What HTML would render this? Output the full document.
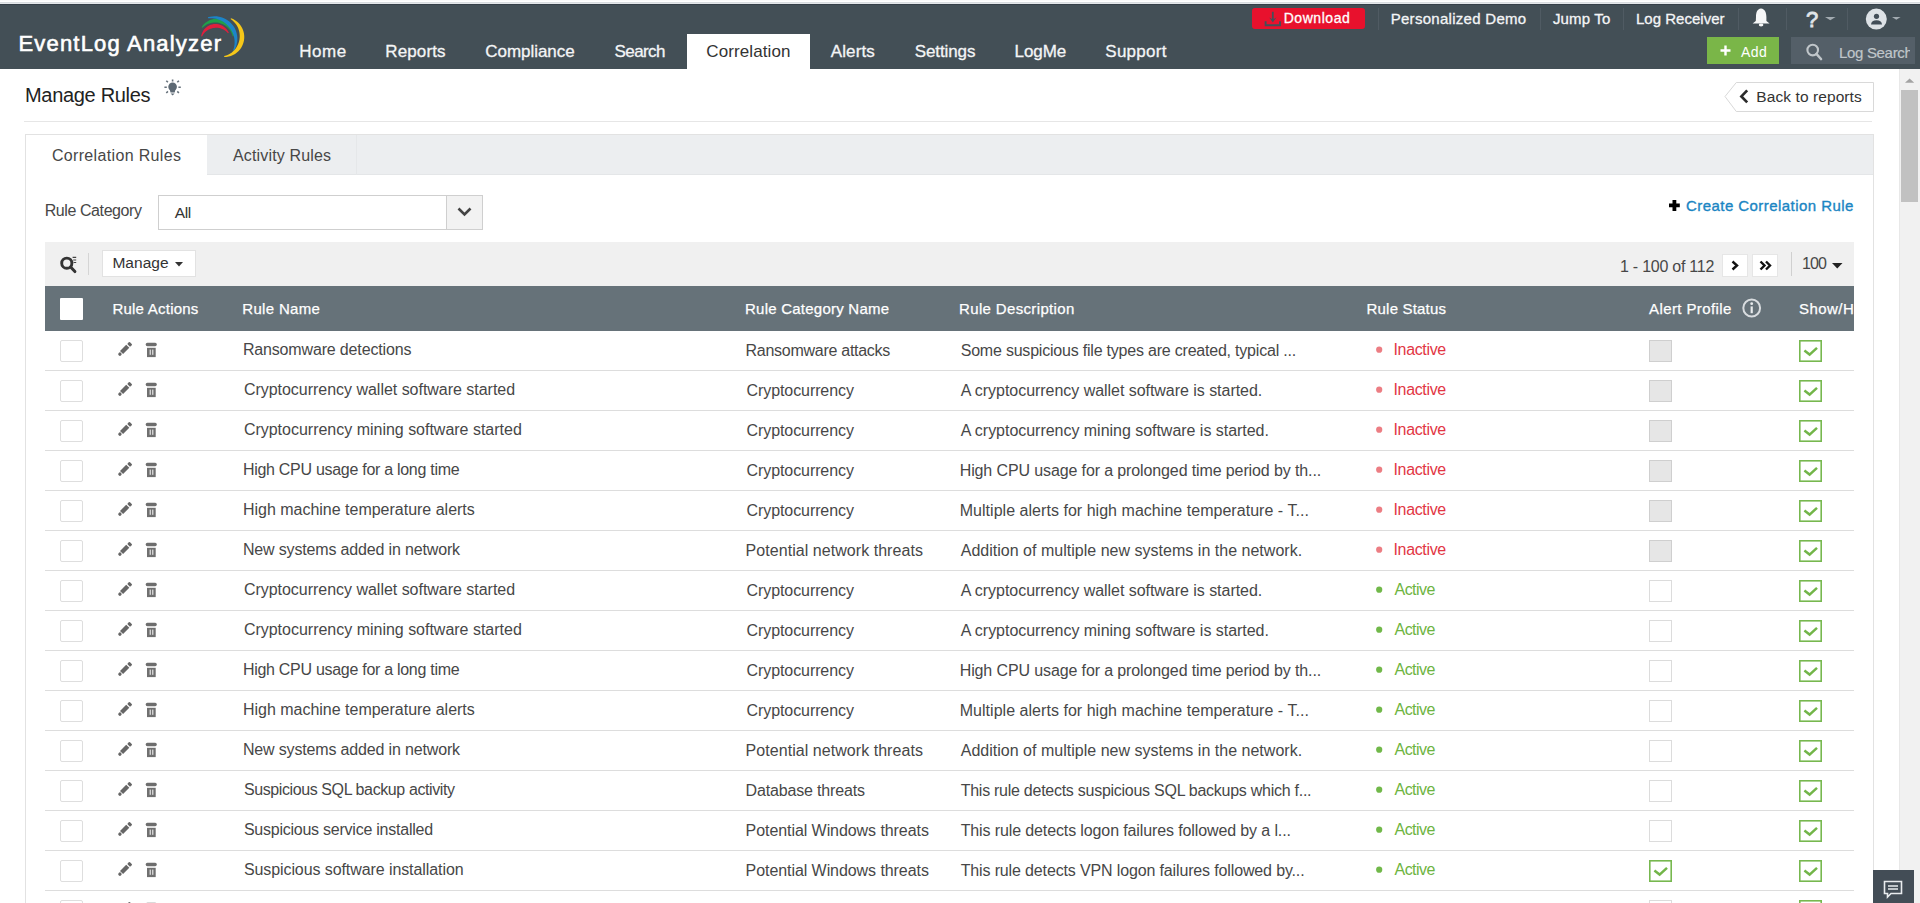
<!DOCTYPE html><html><head><meta charset="utf-8"><style>
*{margin:0;padding:0;box-sizing:border-box}
html,body{width:1920px;height:903px;overflow:hidden;background:#fff;font-family:"Liberation Sans",sans-serif}
.t{position:absolute;white-space:nowrap}
.r{position:absolute}
svg{position:absolute;overflow:visible}
</style></head><body>
<div class="r" style="left:0px;top:0px;width:1920px;height:1px;background:#fafafa"></div>
<div class="r" style="left:0px;top:2px;width:1920px;height:1px;background:#d8dcdf"></div>
<div class="r" style="left:0px;top:3px;width:1920px;height:1px;background:#e4e7ea"></div>
<div class="r" style="left:0px;top:4px;width:1920px;height:65px;background:#434f56"></div>
<div class="r" style="left:0px;top:4px;width:1920px;height:1px;background:#353f48"></div>
<div class="t" style="left:18.40px;top:33.00px;font-size:22px;line-height:22px;color:#fff;letter-spacing:1.197px;-webkit-text-stroke:0.6px #fff;">EventLog Analyzer</div>
<svg style="left:195px;top:12px;" width="55" height="50" viewBox="0 0 55 50"><path d="M6.12,24.15 L6.46,22.71 L6.94,21.29 L7.56,19.91 L8.34,18.59 L9.25,17.34 L10.30,16.19 L11.47,15.16 L12.76,14.24 L14.14,13.47 L15.61,12.86 L17.13,12.41 L18.70,12.12 L20.30,12.02 L21.89,12.08 L23.46,12.33 L24.99,12.74 L26.46,13.31 L27.85,14.03 L29.14,14.89 L30.33,15.88 L31.40,16.97 L32.34,18.16 L33.15,19.42 L33.83,20.74 L32.97,21.26 L32.06,20.24 L31.07,19.32 L30.01,18.51 L28.89,17.80 L27.74,17.21 L26.55,16.72 L25.34,16.33 L24.11,16.05 L22.87,15.87 L21.63,15.78 L20.40,15.79 L19.17,15.89 L17.95,16.09 L16.75,16.38 L15.57,16.77 L14.41,17.24 L13.29,17.81 L12.21,18.48 L11.17,19.25 L10.20,20.11 L9.29,21.06 L8.46,22.10 L7.71,23.24 L7.08,24.45 Z" fill="#e01f3d"/><path d="M6.60,15.20 L7.62,13.71 L8.79,12.32 L10.11,11.04 L11.58,9.91 L13.16,8.92 L14.86,8.11 L16.65,7.48 L18.50,7.05 L20.40,6.83 L22.32,6.82 L24.23,7.03 L26.11,7.45 L27.93,8.07 L29.67,8.90 L31.30,9.91 L32.80,11.09 L34.16,12.42 L35.36,13.89 L36.38,15.47 L37.22,17.14 L37.87,18.87 L38.34,20.65 L38.61,22.45 L38.70,24.25 L37.70,24.35 L37.26,22.73 L36.67,21.17 L35.93,19.70 L35.07,18.32 L34.10,17.03 L33.02,15.86 L31.86,14.79 L30.62,13.84 L29.31,13.00 L27.94,12.28 L26.52,11.68 L25.05,11.20 L23.56,10.84 L22.03,10.61 L20.49,10.51 L18.93,10.54 L17.37,10.70 L15.82,11.01 L14.29,11.45 L12.79,12.03 L11.34,12.76 L9.94,13.64 L8.62,14.65 L7.40,15.80 Z" fill="#1fa049"/><path d="M12.90,5.31 L15.04,4.76 L17.24,4.41 L19.49,4.28 L21.75,4.36 L24.01,4.67 L26.24,5.21 L28.41,5.98 L30.50,6.96 L32.49,8.17 L34.35,9.57 L36.05,11.16 L37.59,12.92 L38.93,14.83 L40.06,16.87 L40.98,19.01 L41.67,21.23 L42.13,23.50 L42.35,25.79 L42.34,28.08 L42.10,30.35 L41.64,32.57 L40.97,34.71 L40.10,36.77 L39.05,38.72 L38.15,38.28 L38.80,36.28 L39.25,34.25 L39.52,32.20 L39.60,30.15 L39.51,28.12 L39.24,26.12 L38.81,24.17 L38.22,22.26 L37.49,20.43 L36.60,18.66 L35.59,16.98 L34.44,15.39 L33.17,13.89 L31.78,12.50 L30.28,11.22 L28.67,10.06 L26.97,9.03 L25.17,8.15 L23.29,7.41 L21.35,6.83 L19.34,6.42 L17.29,6.19 L15.20,6.14 L13.10,6.29 Z" fill="#1d84c8"/><path d="M36.02,6.15 L38.07,7.03 L40.03,8.15 L41.87,9.48 L43.56,11.04 L45.08,12.79 L46.40,14.72 L47.49,16.80 L48.34,19.01 L48.92,21.32 L49.22,23.69 L49.24,26.08 L48.97,28.46 L48.42,30.79 L47.60,33.04 L46.51,35.17 L45.19,37.14 L43.65,38.94 L41.92,40.53 L40.03,41.91 L38.01,43.04 L35.89,43.93 L33.70,44.57 L31.48,44.96 L29.26,45.10 L29.14,44.10 L31.16,43.52 L33.08,42.74 L34.88,41.78 L36.56,40.64 L38.10,39.36 L39.48,37.95 L40.72,36.43 L41.79,34.82 L42.70,33.12 L43.45,31.35 L44.03,29.53 L44.44,27.67 L44.68,25.78 L44.75,23.88 L44.64,21.96 L44.35,20.06 L43.89,18.17 L43.24,16.32 L42.41,14.53 L41.39,12.81 L40.20,11.18 L38.82,9.66 L37.28,8.27 L35.58,7.05 Z" fill="#f5c719"/></svg>
<div class="r" style="left:687px;top:34px;width:123px;height:35px;background:#fff"></div>
<div class="t" style="left:299.30px;top:43.00px;font-size:17px;line-height:17px;color:#f4f5f6;letter-spacing:0.536px;-webkit-text-stroke:0.3px #f4f5f6;">Home</div>
<div class="t" style="left:385.30px;top:43.00px;font-size:17px;line-height:17px;color:#f4f5f6;letter-spacing:0.113px;-webkit-text-stroke:0.3px #f4f5f6;">Reports</div>
<div class="t" style="left:485.30px;top:43.00px;font-size:17px;line-height:17px;color:#f4f5f6;letter-spacing:-0.046px;-webkit-text-stroke:0.3px #f4f5f6;">Compliance</div>
<div class="t" style="left:614.50px;top:43.00px;font-size:17px;line-height:17px;color:#f4f5f6;letter-spacing:-0.582px;-webkit-text-stroke:0.3px #f4f5f6;">Search</div>
<div class="t" style="left:706.30px;top:43.00px;font-size:17px;line-height:17px;color:#333;letter-spacing:0.101px;">Correlation</div>
<div class="t" style="left:830.80px;top:43.00px;font-size:17px;line-height:17px;color:#f4f5f6;letter-spacing:0.089px;-webkit-text-stroke:0.3px #f4f5f6;">Alerts</div>
<div class="t" style="left:914.70px;top:43.00px;font-size:17px;line-height:17px;color:#f4f5f6;letter-spacing:-0.089px;-webkit-text-stroke:0.3px #f4f5f6;">Settings</div>
<div class="t" style="left:1014.50px;top:43.00px;font-size:17px;line-height:17px;color:#f4f5f6;letter-spacing:-0.056px;-webkit-text-stroke:0.3px #f4f5f6;">LogMe</div>
<div class="t" style="left:1105.30px;top:43.00px;font-size:17px;line-height:17px;color:#f4f5f6;letter-spacing:0.264px;-webkit-text-stroke:0.3px #f4f5f6;">Support</div>
<div class="r" style="left:1252px;top:8px;width:113px;height:21px;background:#e8112d;border-radius:3px"></div>
<svg style="left:1264px;top:11px;" width="18" height="16" viewBox="0 0 18 16"><path d="M8.8,0.8 V10" stroke="#42505a" stroke-width="1.8"/><path d="M5.2,6.4 L8.8,11.4 L12.4,6.4 L8.8,8.6 Z" fill="#42505a"/><path d="M1.6,10.2 V14.2 H16 V10.2" stroke="#42505a" stroke-width="1.9" fill="none"/></svg>
<div class="t" style="left:1283.70px;top:11.00px;font-size:14px;line-height:14px;color:#fff;letter-spacing:0.546px;-webkit-text-stroke:0.3px #fff;">Download</div>
<div class="r" style="left:1378px;top:8px;width:1px;height:22px;background:#505b63"></div>
<div class="r" style="left:1540px;top:8px;width:1px;height:22px;background:#505b63"></div>
<div class="r" style="left:1623px;top:8px;width:1px;height:22px;background:#505b63"></div>
<div class="r" style="left:1738px;top:8px;width:1px;height:22px;background:#505b63"></div>
<div class="r" style="left:1786px;top:8px;width:1px;height:22px;background:#505b63"></div>
<div class="r" style="left:1847px;top:8px;width:1px;height:22px;background:#505b63"></div>
<div class="t" style="left:1390.70px;top:11.00px;font-size:15px;line-height:15px;color:#f4f5f6;letter-spacing:0.284px;-webkit-text-stroke:0.3px #f4f5f6;">Personalized Demo</div>
<div class="t" style="left:1552.90px;top:11.00px;font-size:15px;line-height:15px;color:#f4f5f6;letter-spacing:0.175px;-webkit-text-stroke:0.3px #f4f5f6;">Jump To</div>
<div class="t" style="left:1636.00px;top:11.00px;font-size:15px;line-height:15px;color:#f4f5f6;letter-spacing:0.019px;-webkit-text-stroke:0.3px #f4f5f6;">Log Receiver</div>
<svg style="left:1752px;top:8px;" width="19" height="20" viewBox="0 0 19 20"><path d="M9,0.6 C5,1.2 4,4.8 4,9 L3.8,13 L0.6,15.6 H17.6 L14.4,13 L14.4,9 C14.4,4.8 13,1.2 9,0.6 Z" fill="#f6f7f8"/><ellipse cx="9.1" cy="17" rx="2.3" ry="1.4" fill="#f6f7f8"/></svg>
<div class="t" style="left:1806.00px;top:9.00px;font-size:22px;line-height:22px;color:#e0e4e7;letter-spacing:-1.800px;-webkit-text-stroke:0.8px #e0e4e7;">?</div>
<svg style="left:1824.8px;top:17px;" width="11" height="4" viewBox="0 0 11 4"><path d="M0,0 H10.6 L5.3,3.3 Z" fill="#a3abb1"/></svg>
<svg style="left:1865px;top:8px;" width="24" height="24" viewBox="0 0 24 24"><circle cx="11.3" cy="11.1" r="10.5" fill="#dde2e6"/><circle cx="11.5" cy="8.3" r="2.6" fill="#424e58"/><path d="M6,16.5 Q6.5,12.3 11.5,12.3 Q16.5,12.3 17,16.5 Z" fill="#424e58"/></svg>
<svg style="left:1892px;top:16.8px;" width="9" height="3" viewBox="0 0 9 3"><path d="M0,0 H8.6 L4.3,2.8 Z" fill="#a3abb1"/></svg>
<div class="r" style="left:1707px;top:37px;width:72px;height:27px;background:#7ab648"></div>
<svg style="left:1720px;top:45px;" width="11" height="11" viewBox="0 0 11 11"><path d="M5.5,0.5 V10.5 M0.5,5.5 H10.5" stroke="#fff" stroke-width="2.4"/></svg>
<div class="t" style="left:1740.90px;top:45.00px;font-size:14px;line-height:14px;color:#fff;letter-spacing:0.488px;">Add</div>
<div class="r" style="left:1791px;top:37px;width:124px;height:27px;background:#545f68"></div>
<div class="r" style="left:1791px;top:37px;width:119px;height:27px;overflow:hidden">
<svg style="left:15px;top:5px;" width="17" height="18" viewBox="0 0 17 18"><circle cx="6.7" cy="8.1" r="5.3" stroke="#c0c6ca" stroke-width="2.1" fill="none"/><path d="M10.5,12 L15,17" stroke="#c0c6ca" stroke-width="2.6" stroke-linecap="round"/></svg>
<div class="t" style="left:48.00px;top:8.00px;font-size:15px;line-height:15px;color:#c0c6ca;letter-spacing:-0.320px;-webkit-text-stroke:0.2px #c0c6ca;">Log Search</div>
</div>
<div class="t" style="left:25.00px;top:85.00px;font-size:20px;line-height:20px;color:#222;letter-spacing:-0.315px;">Manage Rules</div>
<svg style="left:162px;top:77px;" width="22" height="22" viewBox="0 0 22 22"><circle cx="10.6" cy="9.7" r="4.3" fill="#5d6974"/><path d="M7.4,11 L13.8,11 L12.7,15.4 H8.5 Z" fill="#5d6974"/><path d="M8.6,16.5 H12.6 L10.6,18.6 Z" fill="#5d6974"/><path d="M10.6,2.4 V4.6 M2.4,10.3 H4.8 M16.4,10.3 H18.8 M4.3,3.7 L5.9,5.3 M16.9,3.7 L15.3,5.3 M4.3,16 L5.9,14.4 M16.9,16 L15.3,14.4" stroke="#66717b" stroke-width="1.6"/></svg>
<svg style="left:1724px;top:81px;" width="151" height="32" viewBox="0 0 151 32"><path d="M12.3,1.5 H149.5 V30.5 H12.3 L1,15.5 Z" fill="#fff" stroke="#d9d9d9" stroke-width="1"/><path d="M23.2,9.4 L17.4,15.4 L23.2,21.4" stroke="#2b2b2b" stroke-width="2.7" fill="none"/></svg>
<div class="t" style="left:1756.30px;top:89.00px;font-size:15.5px;line-height:15.5px;color:#333;letter-spacing:0.086px;">Back to reports</div>
<div class="r" style="left:24px;top:121px;width:1848px;height:1px;background:#e6e6e6"></div>
<div class="r" style="left:25px;top:134px;width:1849px;height:800px;border:1px solid #e2e2e2;background:#fff"></div>
<div class="r" style="left:26px;top:135px;width:1847px;height:40px;background:#eceef0;border-bottom:1px solid #e4e6e8"></div>
<div class="r" style="left:26px;top:135px;width:181px;height:41px;background:#fff"></div>
<div class="r" style="left:356px;top:135px;width:1px;height:40px;background:#e5e7e9"></div>
<div class="t" style="left:51.90px;top:148.00px;font-size:16px;line-height:16px;color:#474747;letter-spacing:0.343px;">Correlation Rules</div>
<div class="t" style="left:233.00px;top:148.00px;font-size:16px;line-height:16px;color:#474747;letter-spacing:0.152px;">Activity Rules</div>
<div class="t" style="left:44.70px;top:203.00px;font-size:16px;line-height:16px;color:#474747;letter-spacing:-0.414px;">Rule Category</div>
<div class="r" style="left:158px;top:195px;width:325px;height:35px;border:1px solid #cfcfcf;background:#fff"></div>
<div class="r" style="left:446px;top:196px;width:36px;height:33px;background:#f2f2f2;border-left:1px solid #cfcfcf"></div>
<svg style="left:457px;top:207px;" width="15" height="10" viewBox="0 0 15 10"><path d="M1.5,1.5 L7.5,7.5 L13.5,1.5" stroke="#444" stroke-width="2.6" fill="none"/></svg>
<div class="t" style="left:174.80px;top:205.00px;font-size:15.5px;line-height:15.5px;color:#333;letter-spacing:-0.391px;">All</div>
<svg style="left:1669px;top:200px;" width="11" height="11" viewBox="0 0 11 11"><path d="M5.4,0 V10.9 M0,5.45 H10.8" stroke="#000" stroke-width="3.8"/></svg>
<div class="t" style="left:1686.00px;top:198.00px;font-size:15px;line-height:15px;color:#1a85c3;letter-spacing:0.444px;-webkit-text-stroke:0.35px #1a85c3;">Create Correlation Rule</div>
<div class="r" style="left:45px;top:242px;width:1809px;height:44px;background:#f0f0f0"></div>
<svg style="left:59px;top:255px;" width="19" height="19" viewBox="0 0 19 19"><circle cx="7.8" cy="8.2" r="5.1" stroke="#333" stroke-width="2.9" fill="none"/><path d="M11.6,12 L15.9,16.6" stroke="#333" stroke-width="3" stroke-linecap="round"/><path d="M13.6,2.4 H17.2 M14.2,5 H17.2 M14.6,7.5 H17.2" stroke="#444" stroke-width="1.2"/></svg>
<div class="r" style="left:88px;top:253px;width:1px;height:22px;background:#d5d5d5"></div>
<div class="r" style="left:102px;top:250px;width:94px;height:27px;background:#fff;border:1px solid #e2e2e2"></div>
<div class="t" style="left:112.40px;top:255.00px;font-size:15.5px;line-height:15.5px;color:#333;letter-spacing:0.041px;">Manage</div>
<svg style="left:175px;top:262px;" width="9" height="5" viewBox="0 0 9 5"><path d="M0,0 H8 L4,4.5 Z" fill="#333"/></svg>
<div class="t" style="left:1620.00px;top:259.00px;font-size:16px;line-height:16px;color:#474747;letter-spacing:-0.243px;">1 - 100 of 112</div>
<div class="r" style="left:1722px;top:254px;width:26px;height:23px;background:#fff;border:1px solid #e6e6e6"></div>
<svg style="left:1731px;top:260px;" width="8" height="11" viewBox="0 0 8 11"><path d="M1.5,1.5 L6,5.5 L1.5,9.5" stroke="#111" stroke-width="2.4" fill="none"/></svg>
<div class="r" style="left:1752px;top:254px;width:26px;height:23px;background:#fff;border:1px solid #e6e6e6"></div>
<svg style="left:1759px;top:260px;" width="13" height="11" viewBox="0 0 13 11"><path d="M1.5,1.5 L5.5,5.5 L1.5,9.5 M7,1.5 L11,5.5 L7,9.5" stroke="#111" stroke-width="2.4" fill="none"/></svg>
<div class="r" style="left:1791px;top:252px;width:1px;height:24px;background:#d0d0d0"></div>
<div class="t" style="left:1802.00px;top:256.00px;font-size:16px;line-height:16px;color:#474747;letter-spacing:-0.898px;">100</div>
<svg style="left:1832px;top:263px;" width="11" height="6" viewBox="0 0 11 6"><path d="M0,0 H10.5 L5.25,5.5 Z" fill="#222"/></svg>
<div class="r" style="left:45px;top:286px;width:1809px;height:45px;background:#667279"></div>
<div class="r" style="left:60px;top:298px;width:23px;height:22px;background:#fff;border-radius:1px"></div>
<div class="t" style="left:112.40px;top:301.00px;font-size:15px;line-height:15px;color:#fff;letter-spacing:0.236px;-webkit-text-stroke:0.25px #fff;">Rule Actions</div>
<div class="t" style="left:242.30px;top:301.00px;font-size:15px;line-height:15px;color:#fff;letter-spacing:0.314px;-webkit-text-stroke:0.25px #fff;">Rule Name</div>
<div class="t" style="left:745.00px;top:301.00px;font-size:15px;line-height:15px;color:#fff;letter-spacing:0.234px;-webkit-text-stroke:0.25px #fff;">Rule Category Name</div>
<div class="t" style="left:959.00px;top:301.00px;font-size:15px;line-height:15px;color:#fff;letter-spacing:0.353px;-webkit-text-stroke:0.25px #fff;">Rule Description</div>
<div class="t" style="left:1366.60px;top:301.00px;font-size:15px;line-height:15px;color:#fff;letter-spacing:0.176px;-webkit-text-stroke:0.25px #fff;">Rule Status</div>
<div class="t" style="left:1649.00px;top:301.00px;font-size:15px;line-height:15px;color:#fff;letter-spacing:0.401px;-webkit-text-stroke:0.25px #fff;">Alert Profile</div>
<svg style="left:1742px;top:298px;" width="20" height="20" viewBox="0 0 20 20"><circle cx="9.7" cy="10" r="8.4" stroke="#d8dcdf" stroke-width="2" fill="none"/><circle cx="9.7" cy="5.7" r="1.4" fill="#e8ebed"/><path d="M9.7,8.4 V15.2" stroke="#e8ebed" stroke-width="2.2"/></svg>
<div class="r" style="left:1790px;top:286px;width:64px;height:45px;overflow:hidden">
<div class="t" style="left:9.00px;top:15.00px;font-size:15px;line-height:15px;color:#fff;letter-spacing:0.451px;-webkit-text-stroke:0.25px #fff;">Show/Hide</div>
</div>
<div class="r" style="left:0;top:331px;width:1854px;height:572px;overflow:hidden">
<div class="r" style="left:45px;top:39px;width:1809px;height:1px;background:#dddddd"></div>
<div class="r" style="left:60px;top:9px;width:23px;height:22px;border:1px solid #dedede;border-radius:2px;background:#fff"></div>
<svg style="left:112px;top:7px;" width="25" height="22" viewBox="0 0 25 22"><g transform="translate(7,17) rotate(-45)" fill="#666"><circle cx="1.3" cy="0" r="1.7"/><rect x="3.6" y="-2.2" width="8.8" height="4.4"/><rect x="13.6" y="-2.1" width="3.2" height="4.2" rx="0.9"/></g></svg>
<svg style="left:145px;top:11px;" width="13" height="16" viewBox="0 0 13 16"><rect x="0.7" y="0.7" width="11.1" height="3.5" rx="1.6" fill="#6e6e6e"/><rect x="2" y="5.8" width="8.7" height="9.3" fill="#707070"/><rect x="4.6" y="7.6" width="1.3" height="5.2" fill="#ddd"/><rect x="7.1" y="7.6" width="1.3" height="5.2" fill="#ddd"/></svg>
<div class="t" style="left:242.90px;top:11.00px;font-size:16px;line-height:16px;color:#474747;letter-spacing:-0.157px;">Ransomware detections</div>
<div class="t" style="left:745.60px;top:12.00px;font-size:16px;line-height:16px;color:#474747;letter-spacing:-0.276px;">Ransomware attacks</div>
<div class="t" style="left:960.70px;top:12.00px;font-size:16px;line-height:16px;color:#474747;letter-spacing:-0.210px;">Some suspicious file types are created, typical ...</div>
<svg style="left:1375px;top:14px;" width="8" height="8" viewBox="0 0 8 8"><circle cx="4.2" cy="4.7" r="3.1" fill="#ec7d83"/></svg>
<div class="t" style="left:1393.50px;top:11.00px;font-size:16px;line-height:16px;color:#e23644;letter-spacing:-0.349px;">Inactive</div>
<div class="r" style="left:1649px;top:9px;width:23px;height:22px;border:1px solid #cfcfcf;background:#e6e6e6"></div>
<svg style="left:1799px;top:9px;" width="23" height="22" viewBox="0 0 23 22"><rect x="0.8" y="0.8" width="21.4" height="20.4" fill="#fff" stroke="#77b84f" stroke-width="1.6"/><path d="M5.4,10.6 L10.6,14.6 L18,7.8" stroke="#72b548" stroke-width="2.5" fill="none"/></svg>
<div class="r" style="left:45px;top:79px;width:1809px;height:1px;background:#dddddd"></div>
<div class="r" style="left:60px;top:49px;width:23px;height:22px;border:1px solid #dedede;border-radius:2px;background:#fff"></div>
<svg style="left:112px;top:47px;" width="25" height="22" viewBox="0 0 25 22"><g transform="translate(7,17) rotate(-45)" fill="#666"><circle cx="1.3" cy="0" r="1.7"/><rect x="3.6" y="-2.2" width="8.8" height="4.4"/><rect x="13.6" y="-2.1" width="3.2" height="4.2" rx="0.9"/></g></svg>
<svg style="left:145px;top:51px;" width="13" height="16" viewBox="0 0 13 16"><rect x="0.7" y="0.7" width="11.1" height="3.5" rx="1.6" fill="#6e6e6e"/><rect x="2" y="5.8" width="8.7" height="9.3" fill="#707070"/><rect x="4.6" y="7.6" width="1.3" height="5.2" fill="#ddd"/><rect x="7.1" y="7.6" width="1.3" height="5.2" fill="#ddd"/></svg>
<div class="t" style="left:243.90px;top:51.00px;font-size:16px;line-height:16px;color:#474747;letter-spacing:-0.024px;">Cryptocurrency wallet software started</div>
<div class="t" style="left:746.60px;top:52.00px;font-size:16px;line-height:16px;color:#474747;letter-spacing:-0.091px;">Cryptocurrency</div>
<div class="t" style="left:960.70px;top:52.00px;font-size:16px;line-height:16px;color:#474747;letter-spacing:-0.039px;">A cryptocurrency wallet software is started.</div>
<svg style="left:1375px;top:54px;" width="8" height="8" viewBox="0 0 8 8"><circle cx="4.2" cy="4.7" r="3.1" fill="#ec7d83"/></svg>
<div class="t" style="left:1393.50px;top:51.00px;font-size:16px;line-height:16px;color:#e23644;letter-spacing:-0.349px;">Inactive</div>
<div class="r" style="left:1649px;top:49px;width:23px;height:22px;border:1px solid #cfcfcf;background:#e6e6e6"></div>
<svg style="left:1799px;top:49px;" width="23" height="22" viewBox="0 0 23 22"><rect x="0.8" y="0.8" width="21.4" height="20.4" fill="#fff" stroke="#77b84f" stroke-width="1.6"/><path d="M5.4,10.6 L10.6,14.6 L18,7.8" stroke="#72b548" stroke-width="2.5" fill="none"/></svg>
<div class="r" style="left:45px;top:119px;width:1809px;height:1px;background:#dddddd"></div>
<div class="r" style="left:60px;top:89px;width:23px;height:22px;border:1px solid #dedede;border-radius:2px;background:#fff"></div>
<svg style="left:112px;top:87px;" width="25" height="22" viewBox="0 0 25 22"><g transform="translate(7,17) rotate(-45)" fill="#666"><circle cx="1.3" cy="0" r="1.7"/><rect x="3.6" y="-2.2" width="8.8" height="4.4"/><rect x="13.6" y="-2.1" width="3.2" height="4.2" rx="0.9"/></g></svg>
<svg style="left:145px;top:91px;" width="13" height="16" viewBox="0 0 13 16"><rect x="0.7" y="0.7" width="11.1" height="3.5" rx="1.6" fill="#6e6e6e"/><rect x="2" y="5.8" width="8.7" height="9.3" fill="#707070"/><rect x="4.6" y="7.6" width="1.3" height="5.2" fill="#ddd"/><rect x="7.1" y="7.6" width="1.3" height="5.2" fill="#ddd"/></svg>
<div class="t" style="left:243.90px;top:91.00px;font-size:16px;line-height:16px;color:#474747;letter-spacing:-0.012px;">Cryptocurrency mining software started</div>
<div class="t" style="left:746.60px;top:92.00px;font-size:16px;line-height:16px;color:#474747;letter-spacing:-0.091px;">Cryptocurrency</div>
<div class="t" style="left:960.70px;top:92.00px;font-size:16px;line-height:16px;color:#474747;letter-spacing:-0.028px;">A cryptocurrency mining software is started.</div>
<svg style="left:1375px;top:94px;" width="8" height="8" viewBox="0 0 8 8"><circle cx="4.2" cy="4.7" r="3.1" fill="#ec7d83"/></svg>
<div class="t" style="left:1393.50px;top:91.00px;font-size:16px;line-height:16px;color:#e23644;letter-spacing:-0.349px;">Inactive</div>
<div class="r" style="left:1649px;top:89px;width:23px;height:22px;border:1px solid #cfcfcf;background:#e6e6e6"></div>
<svg style="left:1799px;top:89px;" width="23" height="22" viewBox="0 0 23 22"><rect x="0.8" y="0.8" width="21.4" height="20.4" fill="#fff" stroke="#77b84f" stroke-width="1.6"/><path d="M5.4,10.6 L10.6,14.6 L18,7.8" stroke="#72b548" stroke-width="2.5" fill="none"/></svg>
<div class="r" style="left:45px;top:159px;width:1809px;height:1px;background:#dddddd"></div>
<div class="r" style="left:60px;top:129px;width:23px;height:22px;border:1px solid #dedede;border-radius:2px;background:#fff"></div>
<svg style="left:112px;top:127px;" width="25" height="22" viewBox="0 0 25 22"><g transform="translate(7,17) rotate(-45)" fill="#666"><circle cx="1.3" cy="0" r="1.7"/><rect x="3.6" y="-2.2" width="8.8" height="4.4"/><rect x="13.6" y="-2.1" width="3.2" height="4.2" rx="0.9"/></g></svg>
<svg style="left:145px;top:131px;" width="13" height="16" viewBox="0 0 13 16"><rect x="0.7" y="0.7" width="11.1" height="3.5" rx="1.6" fill="#6e6e6e"/><rect x="2" y="5.8" width="8.7" height="9.3" fill="#707070"/><rect x="4.6" y="7.6" width="1.3" height="5.2" fill="#ddd"/><rect x="7.1" y="7.6" width="1.3" height="5.2" fill="#ddd"/></svg>
<div class="t" style="left:242.90px;top:131.00px;font-size:16px;line-height:16px;color:#474747;letter-spacing:-0.286px;">High CPU usage for a long time</div>
<div class="t" style="left:746.60px;top:132.00px;font-size:16px;line-height:16px;color:#474747;letter-spacing:-0.091px;">Cryptocurrency</div>
<div class="t" style="left:959.70px;top:132.00px;font-size:16px;line-height:16px;color:#474747;letter-spacing:-0.117px;">High CPU usage for a prolonged time period by th...</div>
<svg style="left:1375px;top:134px;" width="8" height="8" viewBox="0 0 8 8"><circle cx="4.2" cy="4.7" r="3.1" fill="#ec7d83"/></svg>
<div class="t" style="left:1393.50px;top:131.00px;font-size:16px;line-height:16px;color:#e23644;letter-spacing:-0.349px;">Inactive</div>
<div class="r" style="left:1649px;top:129px;width:23px;height:22px;border:1px solid #cfcfcf;background:#e6e6e6"></div>
<svg style="left:1799px;top:129px;" width="23" height="22" viewBox="0 0 23 22"><rect x="0.8" y="0.8" width="21.4" height="20.4" fill="#fff" stroke="#77b84f" stroke-width="1.6"/><path d="M5.4,10.6 L10.6,14.6 L18,7.8" stroke="#72b548" stroke-width="2.5" fill="none"/></svg>
<div class="r" style="left:45px;top:199px;width:1809px;height:1px;background:#dddddd"></div>
<div class="r" style="left:60px;top:169px;width:23px;height:22px;border:1px solid #dedede;border-radius:2px;background:#fff"></div>
<svg style="left:112px;top:167px;" width="25" height="22" viewBox="0 0 25 22"><g transform="translate(7,17) rotate(-45)" fill="#666"><circle cx="1.3" cy="0" r="1.7"/><rect x="3.6" y="-2.2" width="8.8" height="4.4"/><rect x="13.6" y="-2.1" width="3.2" height="4.2" rx="0.9"/></g></svg>
<svg style="left:145px;top:171px;" width="13" height="16" viewBox="0 0 13 16"><rect x="0.7" y="0.7" width="11.1" height="3.5" rx="1.6" fill="#6e6e6e"/><rect x="2" y="5.8" width="8.7" height="9.3" fill="#707070"/><rect x="4.6" y="7.6" width="1.3" height="5.2" fill="#ddd"/><rect x="7.1" y="7.6" width="1.3" height="5.2" fill="#ddd"/></svg>
<div class="t" style="left:242.90px;top:171.00px;font-size:16px;line-height:16px;color:#474747;letter-spacing:-0.007px;">High machine temperature alerts</div>
<div class="t" style="left:746.60px;top:172.00px;font-size:16px;line-height:16px;color:#474747;letter-spacing:-0.091px;">Cryptocurrency</div>
<div class="t" style="left:959.70px;top:172.00px;font-size:16px;line-height:16px;color:#474747;letter-spacing:0.035px;">Multiple alerts for high machine temperature - T...</div>
<svg style="left:1375px;top:174px;" width="8" height="8" viewBox="0 0 8 8"><circle cx="4.2" cy="4.7" r="3.1" fill="#ec7d83"/></svg>
<div class="t" style="left:1393.50px;top:171.00px;font-size:16px;line-height:16px;color:#e23644;letter-spacing:-0.349px;">Inactive</div>
<div class="r" style="left:1649px;top:169px;width:23px;height:22px;border:1px solid #cfcfcf;background:#e6e6e6"></div>
<svg style="left:1799px;top:169px;" width="23" height="22" viewBox="0 0 23 22"><rect x="0.8" y="0.8" width="21.4" height="20.4" fill="#fff" stroke="#77b84f" stroke-width="1.6"/><path d="M5.4,10.6 L10.6,14.6 L18,7.8" stroke="#72b548" stroke-width="2.5" fill="none"/></svg>
<div class="r" style="left:45px;top:239px;width:1809px;height:1px;background:#dddddd"></div>
<div class="r" style="left:60px;top:209px;width:23px;height:22px;border:1px solid #dedede;border-radius:2px;background:#fff"></div>
<svg style="left:112px;top:207px;" width="25" height="22" viewBox="0 0 25 22"><g transform="translate(7,17) rotate(-45)" fill="#666"><circle cx="1.3" cy="0" r="1.7"/><rect x="3.6" y="-2.2" width="8.8" height="4.4"/><rect x="13.6" y="-2.1" width="3.2" height="4.2" rx="0.9"/></g></svg>
<svg style="left:145px;top:211px;" width="13" height="16" viewBox="0 0 13 16"><rect x="0.7" y="0.7" width="11.1" height="3.5" rx="1.6" fill="#6e6e6e"/><rect x="2" y="5.8" width="8.7" height="9.3" fill="#707070"/><rect x="4.6" y="7.6" width="1.3" height="5.2" fill="#ddd"/><rect x="7.1" y="7.6" width="1.3" height="5.2" fill="#ddd"/></svg>
<div class="t" style="left:242.90px;top:211.00px;font-size:16px;line-height:16px;color:#474747;letter-spacing:-0.157px;">New systems added in network</div>
<div class="t" style="left:745.60px;top:212.00px;font-size:16px;line-height:16px;color:#474747;letter-spacing:0.050px;">Potential network threats</div>
<div class="t" style="left:960.70px;top:212.00px;font-size:16px;line-height:16px;color:#474747;letter-spacing:0.018px;">Addition of multiple new systems in the network.</div>
<svg style="left:1375px;top:214px;" width="8" height="8" viewBox="0 0 8 8"><circle cx="4.2" cy="4.7" r="3.1" fill="#ec7d83"/></svg>
<div class="t" style="left:1393.50px;top:211.00px;font-size:16px;line-height:16px;color:#e23644;letter-spacing:-0.349px;">Inactive</div>
<div class="r" style="left:1649px;top:209px;width:23px;height:22px;border:1px solid #cfcfcf;background:#e6e6e6"></div>
<svg style="left:1799px;top:209px;" width="23" height="22" viewBox="0 0 23 22"><rect x="0.8" y="0.8" width="21.4" height="20.4" fill="#fff" stroke="#77b84f" stroke-width="1.6"/><path d="M5.4,10.6 L10.6,14.6 L18,7.8" stroke="#72b548" stroke-width="2.5" fill="none"/></svg>
<div class="r" style="left:45px;top:279px;width:1809px;height:1px;background:#dddddd"></div>
<div class="r" style="left:60px;top:249px;width:23px;height:22px;border:1px solid #dedede;border-radius:2px;background:#fff"></div>
<svg style="left:112px;top:247px;" width="25" height="22" viewBox="0 0 25 22"><g transform="translate(7,17) rotate(-45)" fill="#666"><circle cx="1.3" cy="0" r="1.7"/><rect x="3.6" y="-2.2" width="8.8" height="4.4"/><rect x="13.6" y="-2.1" width="3.2" height="4.2" rx="0.9"/></g></svg>
<svg style="left:145px;top:251px;" width="13" height="16" viewBox="0 0 13 16"><rect x="0.7" y="0.7" width="11.1" height="3.5" rx="1.6" fill="#6e6e6e"/><rect x="2" y="5.8" width="8.7" height="9.3" fill="#707070"/><rect x="4.6" y="7.6" width="1.3" height="5.2" fill="#ddd"/><rect x="7.1" y="7.6" width="1.3" height="5.2" fill="#ddd"/></svg>
<div class="t" style="left:243.90px;top:251.00px;font-size:16px;line-height:16px;color:#474747;letter-spacing:-0.024px;">Cryptocurrency wallet software started</div>
<div class="t" style="left:746.60px;top:252.00px;font-size:16px;line-height:16px;color:#474747;letter-spacing:-0.091px;">Cryptocurrency</div>
<div class="t" style="left:960.70px;top:252.00px;font-size:16px;line-height:16px;color:#474747;letter-spacing:-0.039px;">A cryptocurrency wallet software is started.</div>
<svg style="left:1375px;top:254px;" width="8" height="8" viewBox="0 0 8 8"><circle cx="4.2" cy="4.7" r="3.1" fill="#71b84a"/></svg>
<div class="t" style="left:1394.50px;top:251.00px;font-size:16px;line-height:16px;color:#6db441;letter-spacing:-0.534px;">Active</div>
<div class="r" style="left:1649px;top:249px;width:23px;height:22px;border:1px solid #dcdcdc;background:#fff"></div>
<svg style="left:1799px;top:249px;" width="23" height="22" viewBox="0 0 23 22"><rect x="0.8" y="0.8" width="21.4" height="20.4" fill="#fff" stroke="#77b84f" stroke-width="1.6"/><path d="M5.4,10.6 L10.6,14.6 L18,7.8" stroke="#72b548" stroke-width="2.5" fill="none"/></svg>
<div class="r" style="left:45px;top:319px;width:1809px;height:1px;background:#dddddd"></div>
<div class="r" style="left:60px;top:289px;width:23px;height:22px;border:1px solid #dedede;border-radius:2px;background:#fff"></div>
<svg style="left:112px;top:287px;" width="25" height="22" viewBox="0 0 25 22"><g transform="translate(7,17) rotate(-45)" fill="#666"><circle cx="1.3" cy="0" r="1.7"/><rect x="3.6" y="-2.2" width="8.8" height="4.4"/><rect x="13.6" y="-2.1" width="3.2" height="4.2" rx="0.9"/></g></svg>
<svg style="left:145px;top:291px;" width="13" height="16" viewBox="0 0 13 16"><rect x="0.7" y="0.7" width="11.1" height="3.5" rx="1.6" fill="#6e6e6e"/><rect x="2" y="5.8" width="8.7" height="9.3" fill="#707070"/><rect x="4.6" y="7.6" width="1.3" height="5.2" fill="#ddd"/><rect x="7.1" y="7.6" width="1.3" height="5.2" fill="#ddd"/></svg>
<div class="t" style="left:243.90px;top:291.00px;font-size:16px;line-height:16px;color:#474747;letter-spacing:-0.012px;">Cryptocurrency mining software started</div>
<div class="t" style="left:746.60px;top:292.00px;font-size:16px;line-height:16px;color:#474747;letter-spacing:-0.091px;">Cryptocurrency</div>
<div class="t" style="left:960.70px;top:292.00px;font-size:16px;line-height:16px;color:#474747;letter-spacing:-0.028px;">A cryptocurrency mining software is started.</div>
<svg style="left:1375px;top:294px;" width="8" height="8" viewBox="0 0 8 8"><circle cx="4.2" cy="4.7" r="3.1" fill="#71b84a"/></svg>
<div class="t" style="left:1394.50px;top:291.00px;font-size:16px;line-height:16px;color:#6db441;letter-spacing:-0.534px;">Active</div>
<div class="r" style="left:1649px;top:289px;width:23px;height:22px;border:1px solid #dcdcdc;background:#fff"></div>
<svg style="left:1799px;top:289px;" width="23" height="22" viewBox="0 0 23 22"><rect x="0.8" y="0.8" width="21.4" height="20.4" fill="#fff" stroke="#77b84f" stroke-width="1.6"/><path d="M5.4,10.6 L10.6,14.6 L18,7.8" stroke="#72b548" stroke-width="2.5" fill="none"/></svg>
<div class="r" style="left:45px;top:359px;width:1809px;height:1px;background:#dddddd"></div>
<div class="r" style="left:60px;top:329px;width:23px;height:22px;border:1px solid #dedede;border-radius:2px;background:#fff"></div>
<svg style="left:112px;top:327px;" width="25" height="22" viewBox="0 0 25 22"><g transform="translate(7,17) rotate(-45)" fill="#666"><circle cx="1.3" cy="0" r="1.7"/><rect x="3.6" y="-2.2" width="8.8" height="4.4"/><rect x="13.6" y="-2.1" width="3.2" height="4.2" rx="0.9"/></g></svg>
<svg style="left:145px;top:331px;" width="13" height="16" viewBox="0 0 13 16"><rect x="0.7" y="0.7" width="11.1" height="3.5" rx="1.6" fill="#6e6e6e"/><rect x="2" y="5.8" width="8.7" height="9.3" fill="#707070"/><rect x="4.6" y="7.6" width="1.3" height="5.2" fill="#ddd"/><rect x="7.1" y="7.6" width="1.3" height="5.2" fill="#ddd"/></svg>
<div class="t" style="left:242.90px;top:331.00px;font-size:16px;line-height:16px;color:#474747;letter-spacing:-0.286px;">High CPU usage for a long time</div>
<div class="t" style="left:746.60px;top:332.00px;font-size:16px;line-height:16px;color:#474747;letter-spacing:-0.091px;">Cryptocurrency</div>
<div class="t" style="left:959.70px;top:332.00px;font-size:16px;line-height:16px;color:#474747;letter-spacing:-0.117px;">High CPU usage for a prolonged time period by th...</div>
<svg style="left:1375px;top:334px;" width="8" height="8" viewBox="0 0 8 8"><circle cx="4.2" cy="4.7" r="3.1" fill="#71b84a"/></svg>
<div class="t" style="left:1394.50px;top:331.00px;font-size:16px;line-height:16px;color:#6db441;letter-spacing:-0.534px;">Active</div>
<div class="r" style="left:1649px;top:329px;width:23px;height:22px;border:1px solid #dcdcdc;background:#fff"></div>
<svg style="left:1799px;top:329px;" width="23" height="22" viewBox="0 0 23 22"><rect x="0.8" y="0.8" width="21.4" height="20.4" fill="#fff" stroke="#77b84f" stroke-width="1.6"/><path d="M5.4,10.6 L10.6,14.6 L18,7.8" stroke="#72b548" stroke-width="2.5" fill="none"/></svg>
<div class="r" style="left:45px;top:399px;width:1809px;height:1px;background:#dddddd"></div>
<div class="r" style="left:60px;top:369px;width:23px;height:22px;border:1px solid #dedede;border-radius:2px;background:#fff"></div>
<svg style="left:112px;top:367px;" width="25" height="22" viewBox="0 0 25 22"><g transform="translate(7,17) rotate(-45)" fill="#666"><circle cx="1.3" cy="0" r="1.7"/><rect x="3.6" y="-2.2" width="8.8" height="4.4"/><rect x="13.6" y="-2.1" width="3.2" height="4.2" rx="0.9"/></g></svg>
<svg style="left:145px;top:371px;" width="13" height="16" viewBox="0 0 13 16"><rect x="0.7" y="0.7" width="11.1" height="3.5" rx="1.6" fill="#6e6e6e"/><rect x="2" y="5.8" width="8.7" height="9.3" fill="#707070"/><rect x="4.6" y="7.6" width="1.3" height="5.2" fill="#ddd"/><rect x="7.1" y="7.6" width="1.3" height="5.2" fill="#ddd"/></svg>
<div class="t" style="left:242.90px;top:371.00px;font-size:16px;line-height:16px;color:#474747;letter-spacing:-0.007px;">High machine temperature alerts</div>
<div class="t" style="left:746.60px;top:372.00px;font-size:16px;line-height:16px;color:#474747;letter-spacing:-0.091px;">Cryptocurrency</div>
<div class="t" style="left:959.70px;top:372.00px;font-size:16px;line-height:16px;color:#474747;letter-spacing:0.035px;">Multiple alerts for high machine temperature - T...</div>
<svg style="left:1375px;top:374px;" width="8" height="8" viewBox="0 0 8 8"><circle cx="4.2" cy="4.7" r="3.1" fill="#71b84a"/></svg>
<div class="t" style="left:1394.50px;top:371.00px;font-size:16px;line-height:16px;color:#6db441;letter-spacing:-0.534px;">Active</div>
<div class="r" style="left:1649px;top:369px;width:23px;height:22px;border:1px solid #dcdcdc;background:#fff"></div>
<svg style="left:1799px;top:369px;" width="23" height="22" viewBox="0 0 23 22"><rect x="0.8" y="0.8" width="21.4" height="20.4" fill="#fff" stroke="#77b84f" stroke-width="1.6"/><path d="M5.4,10.6 L10.6,14.6 L18,7.8" stroke="#72b548" stroke-width="2.5" fill="none"/></svg>
<div class="r" style="left:45px;top:439px;width:1809px;height:1px;background:#dddddd"></div>
<div class="r" style="left:60px;top:409px;width:23px;height:22px;border:1px solid #dedede;border-radius:2px;background:#fff"></div>
<svg style="left:112px;top:407px;" width="25" height="22" viewBox="0 0 25 22"><g transform="translate(7,17) rotate(-45)" fill="#666"><circle cx="1.3" cy="0" r="1.7"/><rect x="3.6" y="-2.2" width="8.8" height="4.4"/><rect x="13.6" y="-2.1" width="3.2" height="4.2" rx="0.9"/></g></svg>
<svg style="left:145px;top:411px;" width="13" height="16" viewBox="0 0 13 16"><rect x="0.7" y="0.7" width="11.1" height="3.5" rx="1.6" fill="#6e6e6e"/><rect x="2" y="5.8" width="8.7" height="9.3" fill="#707070"/><rect x="4.6" y="7.6" width="1.3" height="5.2" fill="#ddd"/><rect x="7.1" y="7.6" width="1.3" height="5.2" fill="#ddd"/></svg>
<div class="t" style="left:242.90px;top:411.00px;font-size:16px;line-height:16px;color:#474747;letter-spacing:-0.157px;">New systems added in network</div>
<div class="t" style="left:745.60px;top:412.00px;font-size:16px;line-height:16px;color:#474747;letter-spacing:0.050px;">Potential network threats</div>
<div class="t" style="left:960.70px;top:412.00px;font-size:16px;line-height:16px;color:#474747;letter-spacing:0.018px;">Addition of multiple new systems in the network.</div>
<svg style="left:1375px;top:414px;" width="8" height="8" viewBox="0 0 8 8"><circle cx="4.2" cy="4.7" r="3.1" fill="#71b84a"/></svg>
<div class="t" style="left:1394.50px;top:411.00px;font-size:16px;line-height:16px;color:#6db441;letter-spacing:-0.534px;">Active</div>
<div class="r" style="left:1649px;top:409px;width:23px;height:22px;border:1px solid #dcdcdc;background:#fff"></div>
<svg style="left:1799px;top:409px;" width="23" height="22" viewBox="0 0 23 22"><rect x="0.8" y="0.8" width="21.4" height="20.4" fill="#fff" stroke="#77b84f" stroke-width="1.6"/><path d="M5.4,10.6 L10.6,14.6 L18,7.8" stroke="#72b548" stroke-width="2.5" fill="none"/></svg>
<div class="r" style="left:45px;top:479px;width:1809px;height:1px;background:#dddddd"></div>
<div class="r" style="left:60px;top:449px;width:23px;height:22px;border:1px solid #dedede;border-radius:2px;background:#fff"></div>
<svg style="left:112px;top:447px;" width="25" height="22" viewBox="0 0 25 22"><g transform="translate(7,17) rotate(-45)" fill="#666"><circle cx="1.3" cy="0" r="1.7"/><rect x="3.6" y="-2.2" width="8.8" height="4.4"/><rect x="13.6" y="-2.1" width="3.2" height="4.2" rx="0.9"/></g></svg>
<svg style="left:145px;top:451px;" width="13" height="16" viewBox="0 0 13 16"><rect x="0.7" y="0.7" width="11.1" height="3.5" rx="1.6" fill="#6e6e6e"/><rect x="2" y="5.8" width="8.7" height="9.3" fill="#707070"/><rect x="4.6" y="7.6" width="1.3" height="5.2" fill="#ddd"/><rect x="7.1" y="7.6" width="1.3" height="5.2" fill="#ddd"/></svg>
<div class="t" style="left:243.90px;top:451.00px;font-size:16px;line-height:16px;color:#474747;letter-spacing:-0.397px;">Suspicious SQL backup activity</div>
<div class="t" style="left:745.60px;top:452.00px;font-size:16px;line-height:16px;color:#474747;letter-spacing:-0.163px;">Database threats</div>
<div class="t" style="left:960.70px;top:452.00px;font-size:16px;line-height:16px;color:#474747;letter-spacing:-0.263px;">This rule detects suspicious SQL backups which f...</div>
<svg style="left:1375px;top:454px;" width="8" height="8" viewBox="0 0 8 8"><circle cx="4.2" cy="4.7" r="3.1" fill="#71b84a"/></svg>
<div class="t" style="left:1394.50px;top:451.00px;font-size:16px;line-height:16px;color:#6db441;letter-spacing:-0.534px;">Active</div>
<div class="r" style="left:1649px;top:449px;width:23px;height:22px;border:1px solid #dcdcdc;background:#fff"></div>
<svg style="left:1799px;top:449px;" width="23" height="22" viewBox="0 0 23 22"><rect x="0.8" y="0.8" width="21.4" height="20.4" fill="#fff" stroke="#77b84f" stroke-width="1.6"/><path d="M5.4,10.6 L10.6,14.6 L18,7.8" stroke="#72b548" stroke-width="2.5" fill="none"/></svg>
<div class="r" style="left:45px;top:519px;width:1809px;height:1px;background:#dddddd"></div>
<div class="r" style="left:60px;top:489px;width:23px;height:22px;border:1px solid #dedede;border-radius:2px;background:#fff"></div>
<svg style="left:112px;top:487px;" width="25" height="22" viewBox="0 0 25 22"><g transform="translate(7,17) rotate(-45)" fill="#666"><circle cx="1.3" cy="0" r="1.7"/><rect x="3.6" y="-2.2" width="8.8" height="4.4"/><rect x="13.6" y="-2.1" width="3.2" height="4.2" rx="0.9"/></g></svg>
<svg style="left:145px;top:491px;" width="13" height="16" viewBox="0 0 13 16"><rect x="0.7" y="0.7" width="11.1" height="3.5" rx="1.6" fill="#6e6e6e"/><rect x="2" y="5.8" width="8.7" height="9.3" fill="#707070"/><rect x="4.6" y="7.6" width="1.3" height="5.2" fill="#ddd"/><rect x="7.1" y="7.6" width="1.3" height="5.2" fill="#ddd"/></svg>
<div class="t" style="left:243.90px;top:491.00px;font-size:16px;line-height:16px;color:#474747;letter-spacing:-0.239px;">Suspicious service installed</div>
<div class="t" style="left:745.60px;top:492.00px;font-size:16px;line-height:16px;color:#474747;letter-spacing:-0.070px;">Potential Windows threats</div>
<div class="t" style="left:960.70px;top:492.00px;font-size:16px;line-height:16px;color:#474747;letter-spacing:-0.119px;">This rule detects logon failures followed by a l...</div>
<svg style="left:1375px;top:494px;" width="8" height="8" viewBox="0 0 8 8"><circle cx="4.2" cy="4.7" r="3.1" fill="#71b84a"/></svg>
<div class="t" style="left:1394.50px;top:491.00px;font-size:16px;line-height:16px;color:#6db441;letter-spacing:-0.534px;">Active</div>
<div class="r" style="left:1649px;top:489px;width:23px;height:22px;border:1px solid #dcdcdc;background:#fff"></div>
<svg style="left:1799px;top:489px;" width="23" height="22" viewBox="0 0 23 22"><rect x="0.8" y="0.8" width="21.4" height="20.4" fill="#fff" stroke="#77b84f" stroke-width="1.6"/><path d="M5.4,10.6 L10.6,14.6 L18,7.8" stroke="#72b548" stroke-width="2.5" fill="none"/></svg>
<div class="r" style="left:45px;top:559px;width:1809px;height:1px;background:#dddddd"></div>
<div class="r" style="left:60px;top:529px;width:23px;height:22px;border:1px solid #dedede;border-radius:2px;background:#fff"></div>
<svg style="left:112px;top:527px;" width="25" height="22" viewBox="0 0 25 22"><g transform="translate(7,17) rotate(-45)" fill="#666"><circle cx="1.3" cy="0" r="1.7"/><rect x="3.6" y="-2.2" width="8.8" height="4.4"/><rect x="13.6" y="-2.1" width="3.2" height="4.2" rx="0.9"/></g></svg>
<svg style="left:145px;top:531px;" width="13" height="16" viewBox="0 0 13 16"><rect x="0.7" y="0.7" width="11.1" height="3.5" rx="1.6" fill="#6e6e6e"/><rect x="2" y="5.8" width="8.7" height="9.3" fill="#707070"/><rect x="4.6" y="7.6" width="1.3" height="5.2" fill="#ddd"/><rect x="7.1" y="7.6" width="1.3" height="5.2" fill="#ddd"/></svg>
<div class="t" style="left:243.90px;top:531.00px;font-size:16px;line-height:16px;color:#474747;letter-spacing:-0.085px;">Suspicious software installation</div>
<div class="t" style="left:745.60px;top:532.00px;font-size:16px;line-height:16px;color:#474747;letter-spacing:-0.070px;">Potential Windows threats</div>
<div class="t" style="left:960.70px;top:532.00px;font-size:16px;line-height:16px;color:#474747;letter-spacing:-0.141px;">This rule detects VPN logon failures followed by...</div>
<svg style="left:1375px;top:534px;" width="8" height="8" viewBox="0 0 8 8"><circle cx="4.2" cy="4.7" r="3.1" fill="#71b84a"/></svg>
<div class="t" style="left:1394.50px;top:531.00px;font-size:16px;line-height:16px;color:#6db441;letter-spacing:-0.534px;">Active</div>
<svg style="left:1649px;top:529px;" width="23" height="22" viewBox="0 0 23 22"><rect x="0.8" y="0.8" width="21.4" height="20.4" fill="#fff" stroke="#77b84f" stroke-width="1.6"/><path d="M5.4,10.6 L10.6,14.6 L18,7.8" stroke="#72b548" stroke-width="2.5" fill="none"/></svg>
<svg style="left:1799px;top:529px;" width="23" height="22" viewBox="0 0 23 22"><rect x="0.8" y="0.8" width="21.4" height="20.4" fill="#fff" stroke="#77b84f" stroke-width="1.6"/><path d="M5.4,10.6 L10.6,14.6 L18,7.8" stroke="#72b548" stroke-width="2.5" fill="none"/></svg>
<div class="r" style="left:45px;top:599px;width:1809px;height:1px;background:#dddddd"></div>
<div class="r" style="left:60px;top:569px;width:23px;height:22px;border:1px solid #dedede;border-radius:2px;background:#fff"></div>
<svg style="left:112px;top:567px;" width="25" height="22" viewBox="0 0 25 22"><g transform="translate(7,17) rotate(-45)" fill="#666"><circle cx="1.3" cy="0" r="1.7"/><rect x="3.6" y="-2.2" width="8.8" height="4.4"/><rect x="13.6" y="-2.1" width="3.2" height="4.2" rx="0.9"/></g></svg>
<svg style="left:145px;top:571px;" width="13" height="16" viewBox="0 0 13 16"><rect x="0.7" y="0.7" width="11.1" height="3.5" rx="1.6" fill="#6e6e6e"/><rect x="2" y="5.8" width="8.7" height="9.3" fill="#707070"/><rect x="4.6" y="7.6" width="1.3" height="5.2" fill="#ddd"/><rect x="7.1" y="7.6" width="1.3" height="5.2" fill="#ddd"/></svg>
<div class="r" style="left:1649px;top:569px;width:23px;height:22px;border:1px solid #dcdcdc;background:#fff"></div>
<svg style="left:1799px;top:569px;" width="23" height="22" viewBox="0 0 23 22"><rect x="0.8" y="0.8" width="21.4" height="20.4" fill="#fff" stroke="#77b84f" stroke-width="1.6"/><path d="M5.4,10.6 L10.6,14.6 L18,7.8" stroke="#72b548" stroke-width="2.5" fill="none"/></svg>
</div>
<div class="r" style="left:1899px;top:69px;width:21px;height:834px;background:#f1f1f1;border-left:1px solid #e8e8e8"></div>
<svg style="left:1904px;top:77px;" width="12" height="7" viewBox="0 0 12 7"><path d="M1,5.8 L5.6,1.4 L10.2,5.8 Z" fill="#a3a3a3"/></svg>
<div class="r" style="left:1901px;top:90px;width:17px;height:112px;background:#c1c1c1"></div>
<div class="r" style="left:1873px;top:870px;width:41px;height:33px;background:#434d56"></div>
<svg style="left:1883px;top:880px;" width="21" height="19" viewBox="0 0 21 19"><path d="M1.5,1.5 H18.5 V13.5 H8 L4.5,17 V13.5 H1.5 Z" stroke="#e9ecee" stroke-width="1.6" fill="none"/><path d="M5,6 H15 M5,9 H15" stroke="#e9ecee" stroke-width="1.5"/></svg>
</body></html>
